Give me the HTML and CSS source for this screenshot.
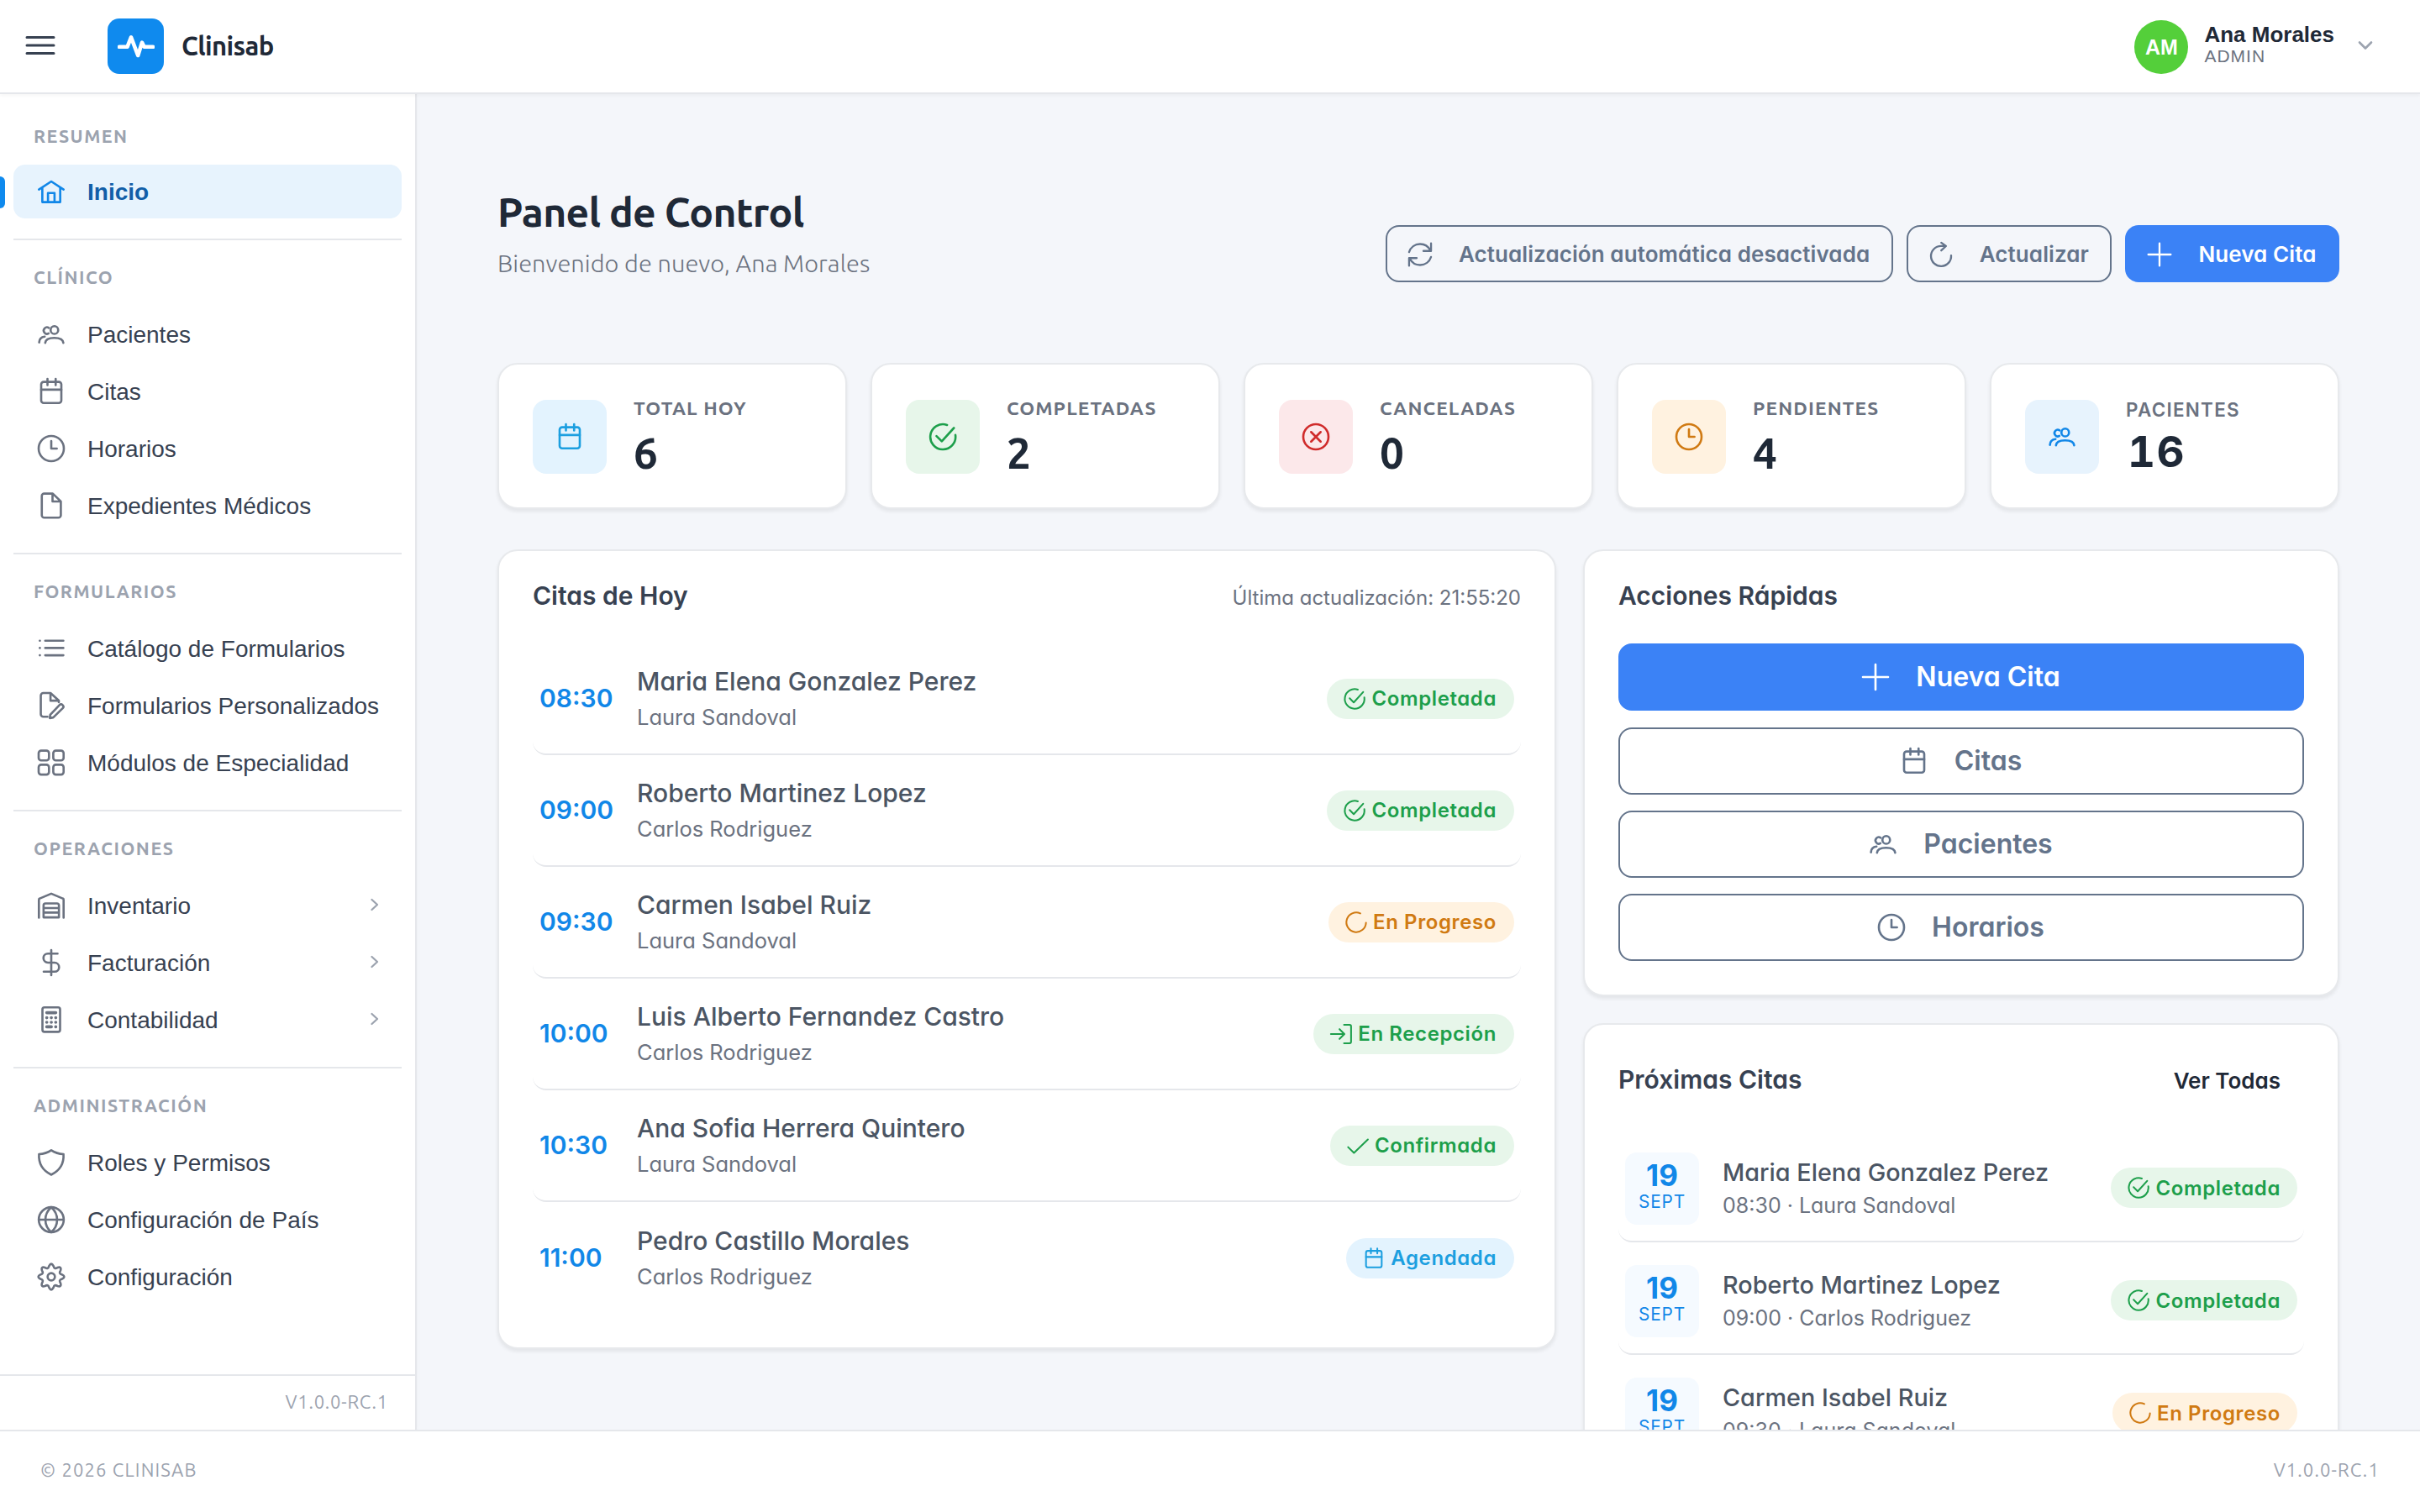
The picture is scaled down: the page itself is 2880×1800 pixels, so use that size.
FILE: index.html
```html
<!DOCTYPE html>
<html lang="es">
<head>
<meta charset="utf-8">
<title>Clinisab</title>
<link rel="stylesheet" href="styles.css">
</head>
<body>
<svg class="sprite" aria-hidden="true">
  <symbol id="home" viewBox="0 0 24 24"><path d="M2.2 10.4 12 4l9.8 6.4M4.9 9v11.4h14.2V9M9.4 20.4v-7.2h5.2v7.2"/></symbol>
  <symbol id="users" viewBox="0 0 24 24"><ellipse cx="14.5" cy="8.6" rx="3" ry="3.1"/><path d="M9.9 11.3a2.6 2.6 0 1 1 .2-4.4M7.2 18.8c.2-2.7 2.2-4 7.2-4s7 1.3 7.2 4M2.4 18.4c.1-2.5 1.3-4.3 4.4-4.6"/></symbol>
  <symbol id="calendar" viewBox="0 0 24 24"><rect x="4" y="4.4" width="16" height="16.8" rx="2"/><path d="M4 10.6h16M9 2v5M15.5 2v5"/></symbol>
  <symbol id="clock" viewBox="0 0 24 24"><circle cx="12" cy="12" r="10"/><path d="M12 6v6h4.4"/></symbol>
  <symbol id="file" viewBox="0 0 24 24"><path d="M6.4 2.4h6.8l6.4 6.2v11a1.9 1.9 0 0 1-1.9 1.9H6.4a1.9 1.9 0 0 1-1.9-1.9V4.3a1.9 1.9 0 0 1 1.9-1.9zM13 2.6v6.1h6.4"/></symbol>
  <symbol id="list" viewBox="0 0 24 24"><path d="M7.2 5.8h14.4M7.2 11.6h14.4M7.2 17.4h14.4M2.9 5.8h.1M2.9 11.6h.1M2.9 17.4h.1"/></symbol>
  <symbol id="file-edit" viewBox="0 0 24 24"><path d="M9 20.8H5.7a2 2 0 0 1-2-2V4a2 2 0 0 1 2-2h5.7l6.6 6v1.3M11.4 2.2v5.9h6.4M11.2 19.2l7.3-7.6a1.8 1.8 0 0 1 2.6 2.5l-7.5 7.3-2.8.5z"/></symbol>
  <symbol id="grid" viewBox="0 0 24 24"><rect x="2" y="2.4" width="8.2" height="7.8" rx="2"/><rect x="13.6" y="2.4" width="8.2" height="7.8" rx="2"/><rect x="2" y="13.6" width="8.2" height="7.8" rx="2"/><rect x="13.6" y="13.6" width="8.2" height="7.8" rx="2"/></symbol>
  <symbol id="warehouse" viewBox="0 0 24 24"><path d="M2.2 21.6V7.4a1 1 0 0 1 .7-1L12 2.6l9.1 3.8a1 1 0 0 1 .7 1v14.2"/><path d="M5.9 21.4V11.8a1.5 1.5 0 0 1 1.5-1.5h9.2a1.5 1.5 0 0 1 1.5 1.5v9.6zM6 14h12M6 17.6h12"/></symbol>
  <symbol id="dollar" viewBox="0 0 24 24"><path d="M12 2v20M17 4.8H9.4a3.6 3.6 0 0 0 0 7.2h5.2a3.6 3.6 0 0 1 0 7.2H6"/></symbol>
  <symbol id="calculator" viewBox="0 0 24 24"><rect x="5" y="2.2" width="14" height="19.4" rx="1.6"/><path d="M8.4 6.4h7.2M8.4 10.4h.1M12 10.4h.1M15.5 10.4h.1M8.4 14h.1M12 14h.1M15.5 14h.1M8.4 17.6h3.7M15.5 17.6h.1" stroke-width="2.4"/></symbol>
  <symbol id="shield" viewBox="0 0 24 24"><path d="M12 2.2c2.9 1.9 6 2.9 9.7 3.1.5 7.4-3 13.1-9.7 16.4C5.3 18.4 1.8 12.7 2.3 5.3 6 5.1 9.1 4.1 12 2.2z"/></symbol>
  <symbol id="globe" viewBox="0 0 24 24"><circle cx="12" cy="12" r="9.9"/><path d="M2.1 12h19.8M12 2.1c-6.2 5.4-6.2 14.4 0 19.8M12 2.1c6.2 5.4 6.2 14.4 0 19.8"/></symbol>
  <symbol id="gear" viewBox="0 0 24 24"><g transform="translate(12 12)"><circle r="2.9"/><path d="M8.63-1.72Q11.9 0 8.63 1.72 5.73 2.37 7.32 4.89 8.4 8.4 4.89 7.32 2.37 5.73 1.72 8.63 0 11.9-1.72 8.63-2.37 5.73-4.89 7.32-8.4 8.4-7.32 4.89-5.73 2.37-8.63 1.72-11.9 0-8.63-1.72-5.73-2.37-7.32-4.89-8.4-8.4-4.89-7.32-2.37-5.73-1.72-8.63 0-11.9 1.72-8.63 2.37-5.73 4.89-7.32 8.4-8.4 7.32-4.89 5.73-2.37 8.63-1.72z"/></g></symbol>
  <symbol id="check-circle" viewBox="0 0 24 24"><path d="M15.4 2.6A10 10 0 1 0 22 10.6M7 11.4l4.2 4.2L20.8 5"/></symbol>
  <symbol id="x-circle" viewBox="0 0 24 24"><circle cx="12" cy="12" r="10"/><path d="m8.2 8.2 7.6 7.6M15.8 8.2l-7.6 7.6"/></symbol>
  <symbol id="progress" viewBox="0 0 24 24"><path d="M16.2 2.9A10 10 0 1 0 22 12.4"/></symbol>
  <symbol id="enter" viewBox="0 0 24 24"><path d="M1.6 12h13.6M10.4 7l5 5-5 5M15 2.6h5.6a1.6 1.6 0 0 1 1.6 1.6v15.6a1.6 1.6 0 0 1-1.6 1.6H15"/></symbol>
  <symbol id="check" viewBox="0 0 24 24"><path d="m2 13.4 6 5.8L22.2 5.6"/></symbol>
  <symbol id="plus" viewBox="0 0 24 24"><path d="M12 2v20M2 12h20"/></symbol>
  <symbol id="sync" viewBox="0 0 24 24"><path d="M2.2 9.8C3.6 5.4 7.4 2.6 12 2.6c4 0 7.4 2.2 9.2 5.8M21.8 2v6.8H15M21.8 14.2c-1.4 4.4-5.2 7.2-9.8 7.2-4 0-7.4-2.2-9.2-5.8M2.2 22v-6.8H9"/></symbol>
  <symbol id="refresh" viewBox="0 0 24 24"><path d="M21 12.8A9 9 0 1 1 12 4.400h4.200M12.200 1.400l4.200 3.100-4.200 3.900"/></symbol>
  <symbol id="right" viewBox="0 0 12 16"><path d="m2.5 2 6.5 6-6.5 6"/></symbol>
  <symbol id="down" viewBox="0 0 20 14"><path d="m3 3.5 7 7 7-7"/></symbol>
</svg>

<div class="app">
  <header class="topbar">
    <svg class="menu" viewBox="0 0 36 28"><path d="M2 4.5h32M2 14h32M2 23.5h32"/></svg>
    <div class="logo"><svg viewBox="0 0 44 28"><path d="M2 14.8h9.5L16 3.4 24.2 25 29 9.6l2.6 5.2H42"/></svg></div>
    <div class="brand">Clinisab</div>
    <div class="user">
      <div class="avatar">AM</div>
      <div class="who"><div class="who-name">Ana Morales</div><div class="who-role">ADMIN</div></div>
      <svg class="caret"><use href="#down"/></svg>
    </div>
  </header>

  <div class="body">
    <aside class="sidebar">
      <nav class="nav">
        <div class="group">
          <div class="group-title">RESUMEN</div>
          <a class="item active"><svg class="ic"><use href="#home"/></svg><span>Inicio</span></a>
        </div>
        <div class="group">
          <div class="group-title">CLÍNICO</div>
          <a class="item"><svg class="ic"><use href="#users"/></svg><span>Pacientes</span></a>
          <a class="item"><svg class="ic"><use href="#calendar"/></svg><span>Citas</span></a>
          <a class="item"><svg class="ic"><use href="#clock"/></svg><span>Horarios</span></a>
          <a class="item"><svg class="ic"><use href="#file"/></svg><span>Expedientes Médicos</span></a>
        </div>
        <div class="group">
          <div class="group-title">FORMULARIOS</div>
          <a class="item"><svg class="ic"><use href="#list"/></svg><span>Catálogo de Formularios</span></a>
          <a class="item"><svg class="ic"><use href="#file-edit"/></svg><span>Formularios Personalizados</span></a>
          <a class="item"><svg class="ic"><use href="#grid"/></svg><span>Módulos de Especialidad</span></a>
        </div>
        <div class="group">
          <div class="group-title">OPERACIONES</div>
          <a class="item"><svg class="ic"><use href="#warehouse"/></svg><span>Inventario</span><svg class="chev"><use href="#right"/></svg></a>
          <a class="item"><svg class="ic"><use href="#dollar"/></svg><span>Facturación</span><svg class="chev"><use href="#right"/></svg></a>
          <a class="item"><svg class="ic"><use href="#calculator"/></svg><span>Contabilidad</span><svg class="chev"><use href="#right"/></svg></a>
        </div>
        <div class="group">
          <div class="group-title">ADMINISTRACIÓN</div>
          <a class="item"><svg class="ic"><use href="#shield"/></svg><span>Roles y Permisos</span></a>
          <a class="item"><svg class="ic"><use href="#globe"/></svg><span>Configuración de País</span></a>
          <a class="item"><svg class="ic"><use href="#gear"/></svg><span>Configuración</span></a>
        </div>
      </nav>
      <div class="version">V1.0.0-RC.1</div>
    </aside>

    <main class="main">
      <div class="page-head">
        <div>
          <h1>Panel de Control</h1>
          <p>Bienvenido de nuevo, Ana Morales</p>
        </div>
        <div class="actions">
          <button class="btn"><svg><use href="#sync"/></svg>Actualización automática desactivada</button>
          <button class="btn"><svg><use href="#refresh"/></svg>Actualizar</button>
          <button class="btn primary"><svg><use href="#plus"/></svg>Nueva Cita</button>
        </div>
      </div>

      <section class="stats">
        <div class="card stat"><div class="tile sky"><svg class="ic"><use href="#calendar"/></svg></div><div><div class="stat-label">TOTAL HOY</div><div class="stat-num">6</div></div></div>
        <div class="card stat"><div class="tile green"><svg class="ic"><use href="#check-circle"/></svg></div><div><div class="stat-label">COMPLETADAS</div><div class="stat-num">2</div></div></div>
        <div class="card stat"><div class="tile red"><svg class="ic"><use href="#x-circle"/></svg></div><div><div class="stat-label">CANCELADAS</div><div class="stat-num">0</div></div></div>
        <div class="card stat"><div class="tile amber"><svg class="ic"><use href="#clock"/></svg></div><div><div class="stat-label">PENDIENTES</div><div class="stat-num">4</div></div></div>
        <div class="card stat alt"><div class="tile blue"><svg class="ic"><use href="#users"/></svg></div><div><div class="stat-label">PACIENTES</div><div class="stat-num">16</div></div></div>
      </section>

      <section class="columns">
        <div class="card today">
          <div class="card-head"><h2>Citas de Hoy</h2><span class="updated">Última actualización: 21:55:20</span></div>
          <div class="row"><div class="time">08:30</div><div class="person"><div class="name">Maria Elena Gonzalez Perez</div><div class="sub">Laura Sandoval</div></div><div class="badge green"><svg><use href="#check-circle"/></svg>Completada</div></div>
          <div class="row"><div class="time">09:00</div><div class="person"><div class="name">Roberto Martinez Lopez</div><div class="sub">Carlos Rodriguez</div></div><div class="badge green"><svg><use href="#check-circle"/></svg>Completada</div></div>
          <div class="row"><div class="time">09:30</div><div class="person"><div class="name">Carmen Isabel Ruiz</div><div class="sub">Laura Sandoval</div></div><div class="badge amber"><svg><use href="#progress"/></svg>En Progreso</div></div>
          <div class="row"><div class="time">10:00</div><div class="person"><div class="name">Luis Alberto Fernandez Castro</div><div class="sub">Carlos Rodriguez</div></div><div class="badge green"><svg><use href="#enter"/></svg>En Recepción</div></div>
          <div class="row"><div class="time">10:30</div><div class="person"><div class="name">Ana Sofia Herrera Quintero</div><div class="sub">Laura Sandoval</div></div><div class="badge green"><svg><use href="#check"/></svg>Confirmada</div></div>
          <div class="row"><div class="time">11:00</div><div class="person"><div class="name">Pedro Castillo Morales</div><div class="sub">Carlos Rodriguez</div></div><div class="badge sky"><svg><use href="#calendar"/></svg>Agendada</div></div>
        </div>

        <div class="side">
          <div class="card quick">
            <div class="card-head"><h2>Acciones Rápidas</h2></div>
            <div class="quick-list">
              <button class="btn big primary"><svg><use href="#plus"/></svg>Nueva Cita</button>
              <button class="btn big"><svg><use href="#calendar"/></svg>Citas</button>
              <button class="btn big"><svg><use href="#users"/></svg>Pacientes</button>
              <button class="btn big"><svg><use href="#clock"/></svg>Horarios</button>
            </div>
          </div>
          <div class="card upcoming">
            <div class="card-head"><h2>Próximas Citas</h2><a class="all">Ver Todas</a></div>
            <div class="row"><div class="date"><b>19</b><span>SEPT</span></div><div class="person"><div class="name">Maria Elena Gonzalez Perez</div><div class="sub">08:30 · Laura Sandoval</div></div><div class="badge green"><svg><use href="#check-circle"/></svg>Completada</div></div>
            <div class="row"><div class="date"><b>19</b><span>SEPT</span></div><div class="person"><div class="name">Roberto Martinez Lopez</div><div class="sub">09:00 · Carlos Rodriguez</div></div><div class="badge green"><svg><use href="#check-circle"/></svg>Completada</div></div>
            <div class="row"><div class="date"><b>19</b><span>SEPT</span></div><div class="person"><div class="name">Carmen Isabel Ruiz</div><div class="sub">09:30 · Laura Sandoval</div></div><div class="badge amber"><svg><use href="#progress"/></svg>En Progreso</div></div>
          </div>
        </div>
      </section>
    </main>
  </div>

  <footer class="footer"><span>© 2026 CLINISAB</span><span>V1.0.0-RC.1</span></footer>
</div>
</body>
</html>
```
FILE: styles.css
```css
* { box-sizing: border-box; }
:root {
  --ui: "Inter", "Noto Sans", sans-serif;
  --display: "Ubuntu", "Noto Sans", sans-serif;
  --nav: "Liberation Sans", Arial, sans-serif;
  --line: #e5e7eb;
}
body { margin: 0; font-family: var(--ui); font-feature-settings: "cv11"; color: #1f2937; background: #f4f6fa; }
h1, h2, p { margin: 0; }
svg { display: block; flex: none; fill: none; stroke: currentColor; stroke-width: 1.75; stroke-linecap: round; stroke-linejoin: round; }
.sprite { position: absolute; width: 0; height: 0; }
.ic { width: 36px; height: 36px; }

.app { display: flex; flex-direction: column; height: 1800px; overflow: hidden; }

.topbar { display: flex; align-items: center; height: 112px; flex: none; padding: 0 55px 0 30px; background: #fff; border-bottom: 2px solid var(--line); box-shadow: 0 2px 4px rgba(0, 0, 0, .04); z-index: 1; }
.menu { width: 36px; height: 28px; stroke: #374151; stroke-width: 3; margin-top: -3px; }
.logo { display: flex; align-items: center; justify-content: center; width: 67px; height: 66px; margin-left: 62px; border-radius: 14px; background: #0f8aee; }
.logo svg { width: 44px; height: 28px; stroke: #fff; stroke-width: 4.6; }
.brand { margin-left: 21px; font: 600 31px/40px var(--display); letter-spacing: -.6px; }
.user { display: flex; align-items: center; margin: 1px 0 0 auto; font-family: var(--nav); }
.avatar { width: 64px; height: 64px; border-radius: 50%; background: #54cf3a; color: #fff; font-weight: 700; font-size: 25px; line-height: 64px; text-align: center; }
.who { margin: -7px 27px 0 19px; }
.who-name { font-weight: 700; font-size: 26px; line-height: 30px; }
.who-role { font-size: 21px; line-height: 22px; letter-spacing: 1px; color: #6b7280; }
.caret { width: 20px; height: 14px; color: #9ca3af; stroke-width: 2.6; margin-top: -4px; }

.body { display: flex; flex: 1; min-height: 0; }
.sidebar { display: flex; flex-direction: column; width: 496px; flex: none; background: #fff; border-right: 2px solid var(--line); box-shadow: 0 0 6px rgba(0, 0, 0, .03); }
.nav { flex: 1; padding: 4px 16px 0; }
.group { padding-bottom: 24px; display: flex; flex-direction: column; gap: 4px; }
.group + .group { border-top: 2px solid var(--line); }
.group-title { height: 76px; padding: 24px 24px 0; font: 600 21.5px/40px var(--display); letter-spacing: 1.5px; color: #9ca3af; }
.group:first-child .group-title { padding-top: 26px; }
.item { position: relative; display: flex; align-items: center; height: 64px; padding: 0 26px 0 27px; border-radius: 14px; font: 28px/40px var(--nav); color: #374151; }
.item span { padding-top: 2px; }
.item .ic { color: #6b7280; margin-right: 25px; }
.item.active { background: #e7f3fd; color: #115ea8; font-weight: 700; }
.item.active .ic { color: #1187e8; }
.item.active::before { content: ""; position: absolute; left: -16px; top: 14px; width: 6px; height: 38px; border-radius: 0 6px 6px 0; background: #0f8aee; }
.chev { width: 12px; height: 16px; margin: -2px 0 0 auto; stroke-width: 2.3; color: #9ca3af; }
.version { height: 66px; padding-right: 32px; border-top: 2px solid var(--line); font: 400 22px/61px var(--display); letter-spacing: .8px; text-align: right; color: #9ca3af; }

.main { flex: 1; min-width: 0; overflow: hidden; padding: 104px 96px 0; }
.page-head { display: flex; justify-content: space-between; align-items: flex-end; height: 120px; margin-bottom: 96px; }
h1 { font: 600 48px/72px var(--display); letter-spacing: -.7px; }
.page-head p { margin-top: 3px; padding-bottom: 1px; font: 300 29px/44px var(--display); letter-spacing: .05px; color: #6b7280; }
.actions { display: flex; gap: 16px; }
.btn { display: flex; align-items: center; justify-content: center; gap: 30px; height: 68px; padding: 1px 25.5px 0 23px; border: 2px solid #64748b; border-radius: 16px; background: none; color: #64748b; font: 600 26px/36px var(--ui); letter-spacing: .08px; font-feature-settings: inherit; white-space: nowrap; }
.btn svg { width: 32px; height: 32px; }
.btn.primary { background: #3b82f6; border-color: #3b82f6; color: #fff; }
.btn.big { height: 80px; gap: 30px; padding: 0 26px 0 24px; font-size: 32px; letter-spacing: 0; }
.btn.big svg { width: 36px; height: 36px; }

.card { background: #fff; border: 2px solid #e7e9ec; border-radius: 24px; box-shadow: 0 3px 4px rgba(0, 0, 0, .07); }
.stats { display: grid; grid-template-columns: repeat(5, 1fr); gap: 28px; margin-bottom: 48px; }
.stat { display: flex; align-items: center; gap: 32px; height: 174px; padding: 2px 40px 0; }
.tile { display: flex; align-items: center; justify-content: center; width: 88px; height: 88px; border-radius: 16px; }
.stat-label { font: 600 22.8px/36px var(--display); letter-spacing: 1.1px; color: #6b7280; }
.stat-num { margin-top: 3px; padding-bottom: 1px; font: 700 51.2px/64px var(--display); }
.alt .stat-label { font: 600 22.4px/39px var(--ui); letter-spacing: 1.3px; }
.alt .stat-num { margin-top: 0; font: 700 51.2px/61px var(--ui); font-variant-numeric: tabular-nums; letter-spacing: 1.5px; padding: 0 0 4px 2px; }
.sky { background: #e3f3fe; color: #1c9fe0; }
.green { background: #e7f6ea; color: #1d9f4b; }
.red { background: #fce8ea; color: #d02b2b; }
.amber { background: #fff2e0; color: #d07a12; }
.blue { background: #e7f3fd; color: #1187e8; }

.columns { display: flex; align-items: flex-start; gap: 32px; }
.today { width: 1260px; height: 952px; padding: 40px; }
.side { flex: 1; display: flex; flex-direction: column; gap: 32px; }
.card-head { display: flex; justify-content: space-between; align-items: center; height: 28px; margin-bottom: 42.4px; }
h2 { padding-bottom: 2px; font-size: 30px; font-weight: 600; line-height: 28px; color: #374151; }
.updated { padding-top: 2px; font-size: 24px; color: #6b7280; }

.row { display: flex; align-items: center; height: 133px; padding: 0 8px; border-bottom: 2px solid var(--line); border-radius: 16px; }
.row:last-child { border-bottom: 0; }
.time { width: 116px; padding-bottom: 2px; font-size: 30px; font-weight: 600; color: #1187e8; }
.person { flex: 1; padding-bottom: 1px; }
.name { font-size: 30px; font-weight: 500; line-height: 44px; color: #4b5563; }
.sub { font-size: 25.5px; line-height: 41px; color: #6b7280; }
.badge { display: flex; align-items: center; gap: 6px; height: 48px; padding: 0 21px 0 19px; border-radius: 24px; font-size: 24px; font-weight: 560; letter-spacing: .6px; }
.badge svg { width: 28px; height: 28px; }

.quick { height: 532px; padding: 40px; }
.quick-list { display: flex; flex-direction: column; gap: 19.2px; }
.upcoming { padding: 40px; height: 640px; }
.upcoming .card-head { height: 50px; margin-bottom: 43px; }
.upcoming h2 { padding-bottom: 1px; }
.all { padding: 3px 28px 0 0; font-size: 26px; font-weight: 600; }
.upcoming .row { height: 126px; margin-bottom: 8px; }
.upcoming .row:last-child { border-bottom: 2px solid var(--line); }
.upcoming .person { padding-bottom: 1px; }
.date { display: flex; flex-direction: column; align-items: center; width: 88px; height: 86px; margin-right: 28px; padding-top: 7px; border-radius: 14px; background: #f5faff; color: #1187e8; }
.date b { font-size: 35px; line-height: 40px; }
.date span { font-size: 20.8px; line-height: 23px; letter-spacing: .8px; }
.upcoming .name { font-size: 28.8px; line-height: 40px; }
.upcoming .sub { font-size: 25px; line-height: 38px; }
.upcoming .badge { margin-bottom: 2px; padding-right: 20px; }

.footer { display: flex; justify-content: space-between; flex: none; height: 98px; padding: 0 48px; background: #fff; border-top: 2px solid var(--line); font: 400 22px/92px var(--display); letter-spacing: 1.15px; color: #9ca3af; z-index: 1; }
```
